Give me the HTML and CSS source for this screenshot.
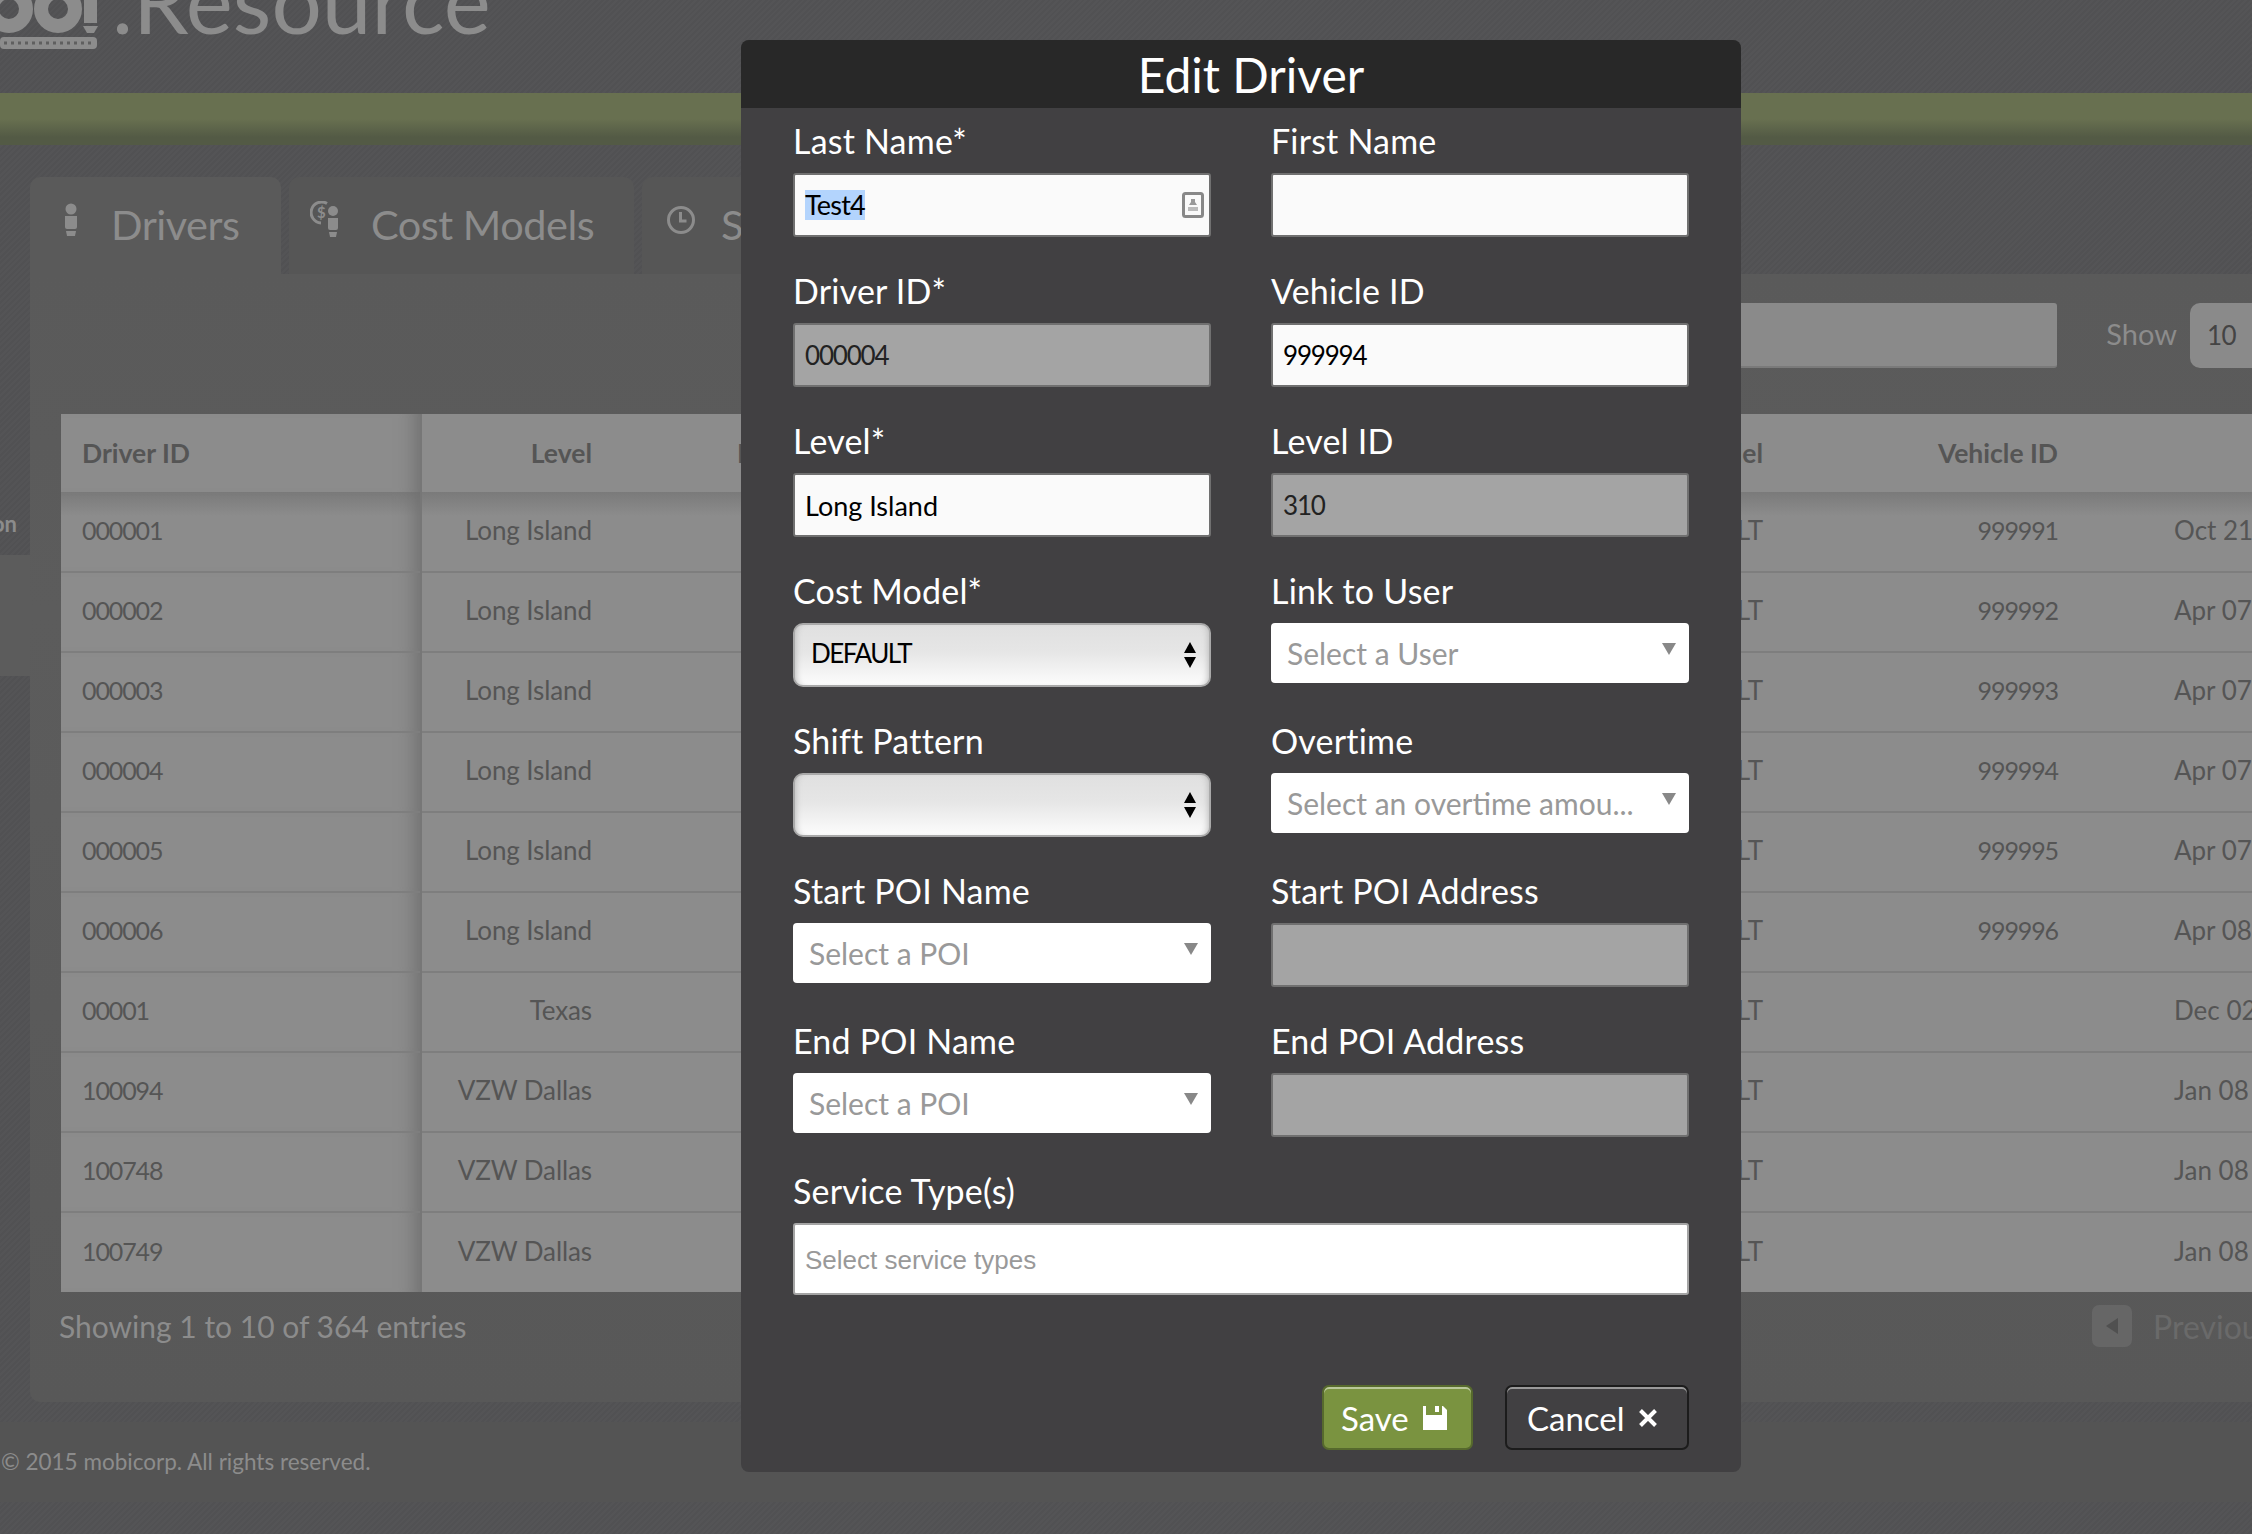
FILE: index.html
```html
<!DOCTYPE html>
<html lang="en">
  <head>
    <meta charset="UTF-8" />
    <title>Edit Driver</title>
    <link rel="stylesheet" href="styles.css">
  </head>
  <body>
    <div class="page">
      <header class="topBar">
        <svg class="logo" width="100" height="50" viewBox="0 0 100 50">
          <circle cx="9" cy="9" r="17" class="logoRing" />
          <circle cx="58" cy="9" r="17" class="logoRing" />
          <rect x="84" y="0" width="13" height="23" class="logoFill" />
          <path d="M83 26h15l-4 7h-7z" class="logoFill" />
          <rect x="0" y="37" width="97" height="12" rx="4" class="logoFill" />
          <path d="M4 43h90" class="logoDots" />
        </svg>
        <div class="brandName">.Resource</div>
      </header>
      <div class="greenBar"></div>

      <div class="content">
        <nav class="sideNav">
          <div class="navItem">Location</div>
          <div class="navItem active"></div>
        </nav>
        <main class="mainCol">
          <div class="tabs">
            <div class="tab active">
              <svg class="tabIcon" width="20" height="34" viewBox="0 0 20 34">
                <circle cx="10" cy="6" r="5.5" />
                <path d="M4 13h12v11a2 2 0 0 1-2 2H6a2 2 0 0 1-2-2z" />
                <path d="M5 28h10l-1 5H6z" />
              </svg>
              <span>Drivers</span>
            </div>
            <div class="tab tabCost">
              <svg class="tabIcon" width="34" height="38" viewBox="0 0 34 38">
                <path d="M17 2.5A10.5 10.500 0 1 0 11 22" class="iconLine" />
                <text x="7" y="17" class="iconDollar">$</text>
                <circle cx="23" cy="10" r="5" />
                <path d="M18 17h10v10a2 2 0 0 1-2 2h-6a2 2 0 0 1-2-2z" />
                <path d="M19 31h8l-1 5h-6z" />
              </svg>
              <span>Cost Models</span>
            </div>
            <div class="tab">
              <svg class="tabIcon" width="30" height="30" viewBox="0 0 30 30">
                <circle cx="15" cy="15" r="12.500" class="iconLine" />
                <path d="M14.500 7v9h6" class="iconLine" />
              </svg>
              <span>Schedules</span>
            </div>
          </div>

          <section class="panel">
            <div class="toolbar">
              <div class="searchBox"></div>
              <span class="showLabel">Show</span>
              <div class="showSelect">10</div>
            </div>

            <table class="driverTable">
              <thead>
                <tr>
                  <th class="colId">Driver ID</th>
                  <th class="colLevel">Level</th>
                  <th class="colName">Last Name</th>
                  <th class="colCost">Cost Model</th>
                  <th class="colVehicle">Vehicle ID</th>
                  <th class="colDate"></th>
                </tr>
              </thead>
              <tbody>
                <tr><td class="colId">000001</td><td class="colLevel">Long Island</td><td></td><td class="colCost">DEFAULT</td><td class="colVehicle">999991</td><td class="colDate">Oct 21</td></tr>
                <tr><td class="colId">000002</td><td class="colLevel">Long Island</td><td></td><td class="colCost">DEFAULT</td><td class="colVehicle">999992</td><td class="colDate">Apr 07</td></tr>
                <tr><td class="colId">000003</td><td class="colLevel">Long Island</td><td></td><td class="colCost">DEFAULT</td><td class="colVehicle">999993</td><td class="colDate">Apr 07</td></tr>
                <tr><td class="colId">000004</td><td class="colLevel">Long Island</td><td></td><td class="colCost">DEFAULT</td><td class="colVehicle">999994</td><td class="colDate">Apr 07</td></tr>
                <tr><td class="colId">000005</td><td class="colLevel">Long Island</td><td></td><td class="colCost">DEFAULT</td><td class="colVehicle">999995</td><td class="colDate">Apr 07</td></tr>
                <tr><td class="colId">000006</td><td class="colLevel">Long Island</td><td></td><td class="colCost">DEFAULT</td><td class="colVehicle">999996</td><td class="colDate">Apr 08</td></tr>
                <tr><td class="colId">00001</td><td class="colLevel">Texas</td><td></td><td class="colCost">DEFAULT</td><td class="colVehicle"></td><td class="colDate">Dec 02</td></tr>
                <tr><td class="colId">100094</td><td class="colLevel">VZW Dallas</td><td></td><td class="colCost">DEFAULT</td><td class="colVehicle"></td><td class="colDate">Jan 08</td></tr>
                <tr><td class="colId">100748</td><td class="colLevel">VZW Dallas</td><td></td><td class="colCost">DEFAULT</td><td class="colVehicle"></td><td class="colDate">Jan 08</td></tr>
                <tr><td class="colId">100749</td><td class="colLevel">VZW Dallas</td><td></td><td class="colCost">DEFAULT</td><td class="colVehicle"></td><td class="colDate">Jan 08</td></tr>
              </tbody>
            </table>

            <div class="tableFooter">
              <span class="entries">Showing 1 to 10 of 364 entries</span>
              <div class="pager">
                <span class="pagerBtn"><i class="pagerArrow"></i></span>
                <span class="pagerText">Previous</span>
              </div>
            </div>
          </section>
        </main>
      </div>

      <footer class="footer">© 2015 mobicorp. All rights reserved.</footer>
    </div>

    <div class="modal">
      <h1 class="modalTitle">Edit Driver</h1>
      <form class="driverForm">
        <div class="field">
          <label>Last Name*</label>
          <div class="input lastName">
            <span class="selected">Test4</span>
            <svg class="contactIcon" width="22" height="26" viewBox="0 0 22 26">
              <rect x="1.500" y="1.500" width="19" height="23" rx="2" class="contactFrame" />
              <path d="M9 7h4v3l2 3H7l2-3z" class="contactMark" />
              <rect x="6" y="15" width="10" height="4" class="contactBar" />
            </svg>
          </div>
        </div>
        <div class="field">
          <label>First Name</label>
          <input class="input" type="text" />
        </div>

        <div class="field">
          <label>Driver ID*</label>
          <input class="input locked digits" type="text" value="000004" readonly />
        </div>
        <div class="field">
          <label>Vehicle ID</label>
          <input class="input digits" type="text" value="999994" />
        </div>

        <div class="field">
          <label>Level*</label>
          <input class="input" type="text" value="Long Island" />
        </div>
        <div class="field">
          <label>Level ID</label>
          <input class="input locked digits" type="text" value="310" readonly />
        </div>

        <div class="field">
          <label>Cost Model*</label>
          <div class="nativeSelect">DEFAULT</div>
        </div>
        <div class="field">
          <label>Link to User</label>
          <div class="comboBox">Select a User</div>
        </div>

        <div class="field">
          <label>Shift Pattern</label>
          <div class="nativeSelect"></div>
        </div>
        <div class="field">
          <label>Overtime</label>
          <div class="comboBox">Select an overtime amou...</div>
        </div>

        <div class="field">
          <label>Start POI Name</label>
          <div class="comboBox">Select a POI</div>
        </div>
        <div class="field">
          <label>Start POI Address</label>
          <input class="input locked" type="text" readonly />
        </div>

        <div class="field">
          <label>End POI Name</label>
          <div class="comboBox">Select a POI</div>
        </div>
        <div class="field">
          <label>End POI Address</label>
          <input class="input locked" type="text" readonly />
        </div>

        <div class="field fullWidth">
          <label>Service Type(s)</label>
          <input class="input serviceTypes" type="text" placeholder="Select service types" />
        </div>
      </form>

      <div class="modalButtons">
        <button class="btn btnSave" type="button">
          Save
          <svg width="24" height="24" viewBox="0 0 24 24">
            <path d="M0 0h3v9h16V0h1l4 4v20H0z" fill="#fff" />
            <rect x="12" y="0" width="4" height="6" fill="#fff" />
          </svg>
        </button>
        <button class="btn btnCancel" type="button">
          Cancel
          <svg width="20" height="20" viewBox="0 0 20 20">
            <path d="M2.500 2.500l15 15M17.500 2.500l-15 15" stroke="#fff" stroke-width="4" fill="none" />
          </svg>
        </button>
      </div>
    </div>
  </body>
</html>
```

FILE: styles.css
```css
* {
  box-sizing: border-box;
}

html,
body {
  margin: 0;
  width: 2252px;
  height: 1534px;
  overflow: hidden;
}

body {
  position: relative;
  font-family: Lato, "Noto Sans", sans-serif;
}

/* page behind the dialog, colours are already dimmed */
.page {
  height: 1534px;
  background: repeating-linear-gradient(-45deg, #545456 0, #545456 2px, #515153 2px, #515153 4px);
}

.topBar {
  display: flex;
  height: 93px;
  overflow: hidden;
}

.logo {
  flex: none;
  display: block;
}

.logoRing {
  fill: none;
  stroke: #8c8c8c;
  stroke-width: 14;
}

.logoFill {
  fill: #8c8c8c;
}

.logoDots {
  stroke: #5f5f5f;
  stroke-width: 3;
  stroke-dasharray: 3 4;
  fill: none;
}

.brandName {
  margin: -65px 0 0 12px;
  font-size: 89px;
  line-height: 130px;
  color: #8c8c8c;
  white-space: nowrap;
}

.greenBar {
  height: 52px;
  background: linear-gradient(#687050 0, #687050 50%, #535a45 85%, #535a45 100%);
}

.content {
  display: flex;
  margin-top: 32px;
}

.sideNav {
  flex: none;
  width: 30px;
  overflow: hidden;
}

.navItem {
  display: flex;
  justify-content: flex-end;
  align-items: flex-end;
  height: 378px;
  padding: 0 13px 16px 0;
  font-size: 22px;
  line-height: 30px;
  font-weight: 700;
  color: #8c8c8c;
  white-space: nowrap;
}

.navItem.active {
  height: 121px;
  padding: 0;
  background: #5c5c5c;
}

.mainCol {
  flex: 1;
  min-width: 0;
}

.tabs {
  display: flex;
  gap: 8px;
  height: 97px;
}

.tab {
  display: flex;
  align-items: center;
  padding: 0 28px 0 24px;
  gap: 25px;
  height: 97px;
  border-radius: 10px 10px 0 0;
  background: #565656;
  font-size: 41.5px;
  color: #8c8c8c;
  white-space: nowrap;
}

.tab span {
  letter-spacing: -0.5px;
  margin-top: -4px;
}

.tab.active {
  width: 251px;
  padding-left: 31px;
  gap: 30px;
  background: #5a5a5a;
}

.tab.tabCost {
  width: 345px;
  padding-left: 21px;
  gap: 27px;
}

.tabIcon {
  flex: none;
  fill: #8c8c8c;
  margin-top: -12px;
}

.iconLine {
  fill: none;
  stroke: #8c8c8c;
  stroke-width: 3;
}

.iconDollar {
  font-size: 15px;
  font-weight: 700;
  fill: #8c8c8c;
}

.panel {
  height: 1128px;
  padding: 29px 0 0 31px;
  border-bottom-left-radius: 10px;
  background: linear-gradient(#5a5a5a, #5c5c5c 30%, #585858);
  overflow: hidden;
}

.toolbar {
  display: flex;
  align-items: center;
  justify-content: flex-end;
  height: 65px;
  margin-bottom: 46px;
  font-size: 29px;
}

.searchBox {
  width: 900px;
  height: 65px;
  border-radius: 3px;
  background: #8a8a8a;
  border-bottom: 2px solid #7a7a7a;
}

.showLabel {
  margin: -4px 0 0 49px;
  color: #8c8c8c;
}

.showSelect {
  width: 62px;
  height: 65px;
  margin-left: 13px;
  padding-left: 17px;
  line-height: 65px;
  border-radius: 10px 0 0 10px;
  background: #8a8a8a;
  color: #444;
  font-size: 26px;
  letter-spacing: -0.5px;
}

.driverTable {
  table-layout: fixed;
  width: 2337px;
  border-collapse: collapse;
  background: #8c8c8c;
  color: #555;
  font-size: 26px;
}

.driverTable th {
  height: 78px;
  font-size: 26.5px;
  font-weight: 700;
  text-align: left;
  padding: 0 20px 1px;
}

.driverTable td {
  height: 80px;
  padding: 0 20px 4px;
  border-top: 2px solid #7e7e7e;
}

.driverTable tbody tr:first-child td {
  border-top: 0;
  background: linear-gradient(#7a7a7a, #8c8c8c 24px);
}

.driverTable .colId {
  width: 360px;
  padding-left: 21px;
  border-right: 2px solid #777;
  box-shadow: inset -24px 0 20px -20px #6e6e6e;
}

.driverTable td.colId,
.driverTable td.colVehicle {
  font-size: 25px;
  letter-spacing: -1.1px;
}

.driverTable .colLevel {
  width: 211px;
  padding-right: 40px;
  text-align: right;
  white-space: nowrap;
}

.driverTable td.colLevel {
  letter-spacing: -0.1px;
}

.driverTable .colName {
  width: 871px;
  padding-left: 105px;
}

.driverTable .colCost {
  width: 300px;
  padding-right: 40px;
  text-align: right;
}

.driverTable .colVehicle {
  width: 295px;
  padding-right: 40px;
  text-align: right;
}

.driverTable .colDate {
  width: 300px;
  padding-left: 76px;
  text-align: left;
}

.tableFooter {
  display: flex;
  justify-content: space-between;
  align-items: center;
  height: 74px;
  padding-bottom: 6px;
}

.entries {
  margin-left: -2px;
  font-size: 30px;
  color: #8c8c8c;
}

.pager {
  display: flex;
  align-items: center;
  gap: 21px;
  font-size: 32px;
  color: #6a6a6a;
}

.pagerBtn {
  display: flex;
  align-items: center;
  justify-content: center;
  width: 40px;
  height: 42px;
  border-radius: 7px;
  background: #666;
}

.pagerArrow {
  border-style: solid;
  border-width: 8px 12px 8px 0;
  border-color: transparent #505050 transparent transparent;
}

.pagerText {
  width: 99px;
  overflow: hidden;
}

.footer {
  height: 80px;
  margin-top: 20px;
  padding-left: 1px;
  line-height: 80px;
  font-size: 22.5px;
  color: #8c8c8c;
  background: #545454;
}

/* dialog */
.modal {
  position: absolute;
  left: 741px;
  top: 40px;
  width: 1000px;
  height: 1432px;
  border-radius: 8px;
  background: #414042;
  overflow: hidden;
}

.modalTitle {
  height: 68px;
  margin: 0;
  padding-left: 20px;
  text-align: center;
  font-size: 48px;
  line-height: 70px;
  font-weight: 400;
  color: #fff;
  background: #282828;
}

.driverForm {
  display: grid;
  grid-template-columns: 418px 418px;
  column-gap: 60px;
  row-gap: 35px;
  padding: 14px 52px 0;
}

.field {
  height: 115px;
}

.field label {
  display: block;
  height: 40px;
  margin-bottom: 11px;
  font-size: 34px;
  line-height: 38px;
  letter-spacing: 0.2px;
  color: #fff;
}

.fullWidth {
  grid-column: 1 / 3;
  height: 122px;
}

.input {
  display: flex;
  align-items: center;
  justify-content: space-between;
  width: 100%;
  height: 64px;
  padding: 0 5px 0 10px;
  border: 2px solid #707070;
  border-radius: 3px;
  background: #fafafa;
  font-family: inherit;
  font-size: 27px;
  color: #000;
  outline: none;
}

.input.digits {
  font-size: 26px;
  letter-spacing: -1.2px;
}

.input.locked {
  background: #a4a4a4;
  color: #222;
}

.selected {
  background: #b3d4fd;
  line-height: 30px;
  letter-spacing: -0.8px;
}

.contactFrame {
  fill: none;
  stroke: #888;
  stroke-width: 3;
}

.contactMark {
  fill: #999;
}

.contactBar {
  fill: #bbb;
}

.serviceTypes {
  height: 72px;
  padding-top: 2px;
  border-color: #a4a4a4;
  background: #fff;
  font-family: "Liberation Sans", sans-serif;
  font-size: 26px;
}

.serviceTypes::placeholder {
  color: #999;
  opacity: 1;
}

.nativeSelect {
  position: relative;
  height: 64px;
  padding-left: 16px;
  border: 2px solid #a9a9a9;
  border-radius: 10px;
  background: linear-gradient(#e0e0e0 0, #e6e6e6 45%, #fcfcfc 100%);
  box-shadow: inset -6px 0 6px -5px #bbb, inset 6px 0 6px -5px #bbb;
  font-size: 26px;
  line-height: 57px;
  letter-spacing: -1.5px;
  color: #000;
}

/* the double arrow on the right of the select */
.nativeSelect::before,
.nativeSelect::after {
  content: "";
  position: absolute;
  right: 13px;
  border-left: 6px solid transparent;
  border-right: 6px solid transparent;
}

.nativeSelect::before {
  top: 17px;
  border-bottom: 11px solid #000;
}

.nativeSelect::after {
  top: 32px;
  border-top: 11px solid #000;
}

.comboBox {
  position: relative;
  height: 60px;
  padding-left: 16px;
  border-radius: 4px;
  background: #fff;
  font-size: 30px;
  line-height: 60px;
  color: #999;
  white-space: nowrap;
}

.comboBox::after {
  content: "";
  position: absolute;
  top: 20px;
  right: 13px;
  border-left: 7px solid transparent;
  border-right: 7px solid transparent;
  border-top: 12px solid #888;
}

.modalButtons {
  display: flex;
  justify-content: flex-end;
  gap: 32px;
  margin-top: 91px;
  padding-right: 52px;
}

.btn {
  display: flex;
  align-items: center;
  height: 65px;
  border-radius: 7px;
  font-family: inherit;
  font-size: 33px;
  color: #fff;
}

.btnSave {
  width: 151px;
  padding-left: 17px;
  gap: 14px;
  border: 2px solid #56692d;
  background: #7a9340;
  box-shadow: inset 0 2px 0 #b9c79a;
}

.btnCancel {
  width: 184px;
  padding-left: 20px;
  gap: 13px;
  border: 2px solid #1c1c1c;
  background: #414042;
  box-shadow: inset 0 2px 0 #999;
}
```
